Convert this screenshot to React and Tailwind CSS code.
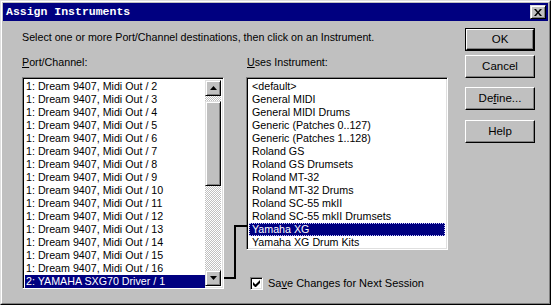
import React from "react";

const ports = [
  "1: Dream 9407, Midi Out / 2",
  "1: Dream 9407, Midi Out / 3",
  "1: Dream 9407, Midi Out / 4",
  "1: Dream 9407, Midi Out / 5",
  "1: Dream 9407, Midi Out / 6",
  "1: Dream 9407, Midi Out / 7",
  "1: Dream 9407, Midi Out / 8",
  "1: Dream 9407, Midi Out / 9",
  "1: Dream 9407, Midi Out / 10",
  "1: Dream 9407, Midi Out / 11",
  "1: Dream 9407, Midi Out / 12",
  "1: Dream 9407, Midi Out / 13",
  "1: Dream 9407, Midi Out / 14",
  "1: Dream 9407, Midi Out / 15",
  "1: Dream 9407, Midi Out / 16",
  "2: YAMAHA SXG70 Driver / 1",
];

const instruments = [
  "<default>",
  "General MIDI",
  "General MIDI Drums",
  "Generic (Patches 0..127)",
  "Generic (Patches 1..128)",
  "Roland GS",
  "Roland GS Drumsets",
  "Roland MT-32",
  "Roland MT-32 Drums",
  "Roland SC-55 mkII",
  "Roland SC-55 mkII Drumsets",
  "Yamaha XG",
  "Yamaha XG Drum Kits",
];

const raised =
  "border border-t-[#dfdfdf] border-l-[#dfdfdf] border-r-black border-b-black shadow-[inset_1px_1px_#fff,inset_-1px_-1px_#808080] bg-[#c0c0c0]";
const sunken =
  "border border-t-[#808080] border-l-[#808080] border-r-white border-b-white shadow-[inset_1px_1px_#000,inset_-1px_-1px_#dfdfdf]";

function Arrow({ down }) {
  return (
    <div className={`w-[16px] h-[16px] flex items-center justify-center ${raised}`}>
      <svg width="7" height="4" viewBox="0 0 7 4">
        {down ? <path d="M0 0h7L3.5 4z" fill="#000" /> : <path d="M0 4h7L3.5 0z" fill="#000" />}
      </svg>
    </div>
  );
}

function Button({ children, isDefault }) {
  const inner = (
    <div className="w-full h-full flex items-center justify-center border border-t-white border-l-white border-r-black border-b-black shadow-[inset_-1px_-1px_#808080] bg-[#c0c0c0] text-[11.5px]">
      {children}
    </div>
  );
  return (
    <div className={`w-[70px] h-[23px] ${isDefault ? "border border-black" : ""}`}>{inner}</div>
  );
}

export default function App() {
  return (
    <div className="relative w-[551px] h-[305px] font-['Liberation_Sans',Arial,sans-serif] text-[10.7px] text-black">
      <div className="w-full h-full bg-[#c0c0c0] border border-t-[#dfdfdf] border-l-[#dfdfdf] border-r-black border-b-black">
        <div className="h-full border border-t-white border-l-white border-r-[#808080] border-b-[#808080] p-px flex flex-col">
          {/* title bar */}
          <div className="h-[18px] bg-[#000080] flex items-center justify-between pl-[3px] pr-[2px]">
            <span className="font-['Liberation_Mono',monospace] font-bold text-[11.5px] text-white leading-none">
              Assign Instruments
            </span>
            <div className={`w-[16px] h-[14px] flex items-center justify-center ${raised}`}>
              <svg width="8" height="7" viewBox="0 0 8 7">
                <path d="M0 0h2l2 2.5L6 0h2L5 3.5 8 7H6L4 4.5 2 7H0l3-3.5z" fill="#000" />
              </svg>
            </div>
          </div>

          <div className="flex flex-1">
            {/* left part */}
            <div className="w-[445px] pl-[19px] pt-[10px] flex flex-col">
              <p className="h-[13px] leading-[13px]">
                Select one or more Port/Channel destinations, then click on an Instrument.
              </p>
              <div className="flex mt-[12px] h-[13px] leading-[13px]">
                <span className="w-[225px]">
                  <span className="underline">P</span>ort/Channel:
                </span>
                <span>
                  <span className="underline">U</span>ses Instrument:
                </span>
              </div>
              <div className="flex gap-[22px] mt-[8px]">
                {/* port list */}
                <div className={`w-[202px] h-[212px] bg-white p-[2px] flex ${sunken}`}>
                  <div className="flex-1 flex flex-col">
                    {ports.map((p, i) => (
                      <div
                        key={p}
                        className={`h-[13px] leading-[13px] pl-[1px] whitespace-nowrap ${
                          i === ports.length - 1 ? "bg-[#000080] text-white" : ""
                        }`}
                      >
                        {p}
                      </div>
                    ))}
                  </div>
                  <div className="w-[16px] flex flex-col">
                    <Arrow />
                    <div className="h-[5px] bg-[image:repeating-conic-gradient(#fff_0%_25%,#c0c0c0_0%_50%)] bg-[length:2px_2px]" />
                    <div className={`h-[85px] ${raised}`} />
                    <div className="flex-1 bg-[image:repeating-conic-gradient(#fff_0%_25%,#c0c0c0_0%_50%)] bg-[length:2px_2px]" />
                    <Arrow down />
                  </div>
                </div>

                {/* instrument list */}
                <div className="flex flex-col">
                  <div className={`w-[202px] h-[173px] bg-white p-[2px] ${sunken}`}>
                    {instruments.map((n) => (
                      <div
                        key={n}
                        className={`h-[13px] leading-[11px] pl-[2px] whitespace-nowrap border border-dotted ${
                          n === "Yamaha XG"
                            ? "bg-[#000080] text-white border-[#c8c8ff]"
                            : "border-transparent"
                        }`}
                      >
                        {n}
                      </div>
                    ))}
                  </div>
                  <label className="flex items-center mt-[27px] ml-[4px] h-[13px]">
                    <span className={`w-[13px] h-[13px] bg-white flex items-center justify-center ${sunken}`}>
                      <svg width="7" height="7" viewBox="0 0 7 7">
                        <path d="M0 2v3l2 2h1l4-4V0L2.5 4.5z" fill="#000" />
                      </svg>
                    </span>
                    <span className="ml-[5px] leading-[13px] text-[11px]">
                      Sa<span className="underline">v</span>e Changes for Next Session
                    </span>
                  </label>
                </div>
              </div>
            </div>

            {/* buttons */}
            <div className="pt-[7px] ml-[17px] flex flex-col">
              <Button isDefault>OK</Button>
              <div className="mt-[4px]">
                <Button>Cancel</Button>
              </div>
              <div className="mt-[9px]">
                <Button>
                  <span>
                    De<span className="underline">f</span>ine...
                  </span>
                </Button>
              </div>
              <div className="mt-[10px]">
                <Button>Help</Button>
              </div>
            </div>
          </div>
        </div>
      </div>

      {/* connector between lists */}
      <svg className="absolute left-[220px] top-[220px]" width="30" height="62" viewBox="0 0 30 62">
        <rect x="4" y="57" width="12" height="2" fill="#000" />
        <rect x="14" y="5" width="2" height="54" fill="#000" />
        <rect x="14" y="5" width="13" height="2" fill="#000" />
      </svg>
    </div>
  );
}
